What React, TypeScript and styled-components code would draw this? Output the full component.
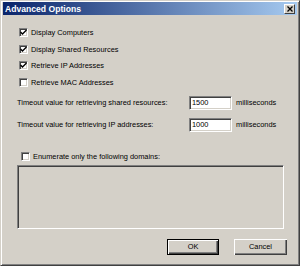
import React from 'react'
import styled, { createGlobalStyle } from 'styled-components'

const GlobalStyle = createGlobalStyle`
  html, body {
    margin: 0;
    padding: 0;
    background: #d4d0c8;
  }
  body {
    font-family: "Liberation Sans", Arial, sans-serif;
    font-size: 7.4px;
    color: #000;
  }
`

const Window = styled.div`
  box-sizing: border-box;
  width: 300px;
  height: 266px;
  background: #d4d0c8;
  border-top: 1px solid #d4d0c8;
  border-left: 1px solid #d4d0c8;
  border-right: 1px solid #404040;
  border-bottom: 1px solid #404040;
  box-shadow: inset 1px 1px 0 #fff, inset -1px -1px 0 #808080;
  padding: 1px 2px 2px 2px;
  display: flex;
  flex-direction: column;
`

const TitleBar = styled.div`
  height: 13px;
  display: flex;
  align-items: center;
  justify-content: space-between;
  padding: 0 2px 0 2px;
  background: linear-gradient(to right, #0a246a, #a6caf0);
`

const Title = styled.span`
  color: #fff;
  font-weight: bold;
  font-size: 8.6px;
`

const CloseButton = styled.div`
  box-sizing: border-box;
  width: 11px;
  height: 10px;
  background: #d4d0c8;
  border-top: 1px solid #fff;
  border-left: 1px solid #fff;
  border-right: 1px solid #404040;
  border-bottom: 1px solid #404040;
  display: flex;
  align-items: center;
  justify-content: center;
`

const Body = styled.div`
  flex: 1;
  display: flex;
  flex-direction: column;
  padding: 9px 10px 0 14px;
`

const CheckList = styled.div`
  display: flex;
  flex-direction: column;
  padding-left: 2px;
`

const CheckRow = styled.label<{ $h?: number }>`
  display: flex;
  align-items: center;
  gap: 3px;
  height: ${p => p.$h ?? 16.7}px;
`

const Box = styled.span`
  box-sizing: border-box;
  width: 9px;
  height: 9px;
  background: #fff;
  border-top: 1px solid #808080;
  border-left: 1px solid #808080;
  border-right: 1px solid #fff;
  border-bottom: 1px solid #fff;
  box-shadow: inset 1px 1px 0 #404040, inset -1px -1px 0 #d4d0c8;
  display: flex;
  align-items: center;
  justify-content: center;
`

const TimeoutGrid = styled.div`
  display: grid;
  grid-template-columns: 168px 43px auto;
  column-gap: 4px;
  row-gap: 8px;
  align-items: center;
  margin-top: 5px;
`

const Field = styled.div`
  box-sizing: border-box;
  height: 14px;
  background: #fff;
  border-top: 1px solid #808080;
  border-left: 1px solid #808080;
  border-right: 1px solid #fff;
  border-bottom: 1px solid #fff;
  box-shadow: inset 1px 1px 0 #404040, inset -1px -1px 0 #d4d0c8;
  padding: 0 2px;
  display: flex;
  align-items: center;
`

const DomainSection = styled.div`
  margin-top: 20px;
  padding-left: 4px;
`

const ListBox = styled.div`
  box-sizing: border-box;
  height: 64px;
  margin-top: 4px;
  margin-right: 3px;
  background: #d4d0c8;
  border-top: 1px solid #808080;
  border-left: 1px solid #808080;
  border-right: 1px solid #fff;
  border-bottom: 1px solid #fff;
  box-shadow: inset 1px 1px 0 #404040, inset -1px -1px 0 #d4d0c8;
`

const ButtonRow = styled.div`
  display: flex;
  justify-content: flex-end;
  gap: 15px;
  margin-top: 10px;
`

const Button = styled.button<{ $default?: boolean }>`
  box-sizing: border-box;
  width: ${p => (p.$default ? 52 : 53)}px;
  height: 16px;
  padding: 0;
  font: inherit;
  color: #000;
  background: #d4d0c8;
  border: ${p => (p.$default ? '1px solid #000' : 'none')};
  box-shadow: inset 1px 1px 0 #fff, inset -1px -1px 0 #404040, inset -2px -2px 0 #808080;
`

const Check = ({ on }: { on: boolean }) => (
  <Box>
    {on && (
      <svg width="7" height="7" viewBox="0 0 7 7">
        <path d="M0.5 3 L2.5 5 L6.5 1" stroke="#000" strokeWidth="1.4" fill="none" />
      </svg>
    )}
  </Box>
)

const options = [
  { label: 'Display Computers', on: true },
  { label: 'Display Shared Resources', on: true },
  { label: 'Retrieve IP Addresses', on: true },
  { label: 'Retrieve MAC Addresses', on: false },
]

export default function App() {
  return (
    <>
      <GlobalStyle />
      <Window>
        <TitleBar>
          <Title>Advanced Options</Title>
          <CloseButton>
            <svg width="6" height="6" viewBox="0 0 6 6">
              <path d="M0.5 0.5 L5.5 5.5 M5.5 0.5 L0.5 5.5" stroke="#000" strokeWidth="1.3" />
            </svg>
          </CloseButton>
        </TitleBar>
        <Body>
          <CheckList>
            {options.map(o => (
              <CheckRow key={o.label}>
                <Check on={o.on} />
                <span>{o.label}</span>
              </CheckRow>
            ))}
          </CheckList>
          <TimeoutGrid>
            <span>Timeout value for retrieving shared resources:</span>
            <Field>1500</Field>
            <span>milliseconds</span>
            <span>Timeout value for retrieving IP addresses:</span>
            <Field>1000</Field>
            <span>milliseconds</span>
          </TimeoutGrid>
          <DomainSection>
            <CheckRow $h={9}>
              <Check on={false} />
              <span>Enumerate only the following domains:</span>
            </CheckRow>
          </DomainSection>
          <ListBox />
          <ButtonRow>
            <Button $default>OK</Button>
            <Button>Cancel</Button>
          </ButtonRow>
        </Body>
      </Window>
    </>
  )
}
